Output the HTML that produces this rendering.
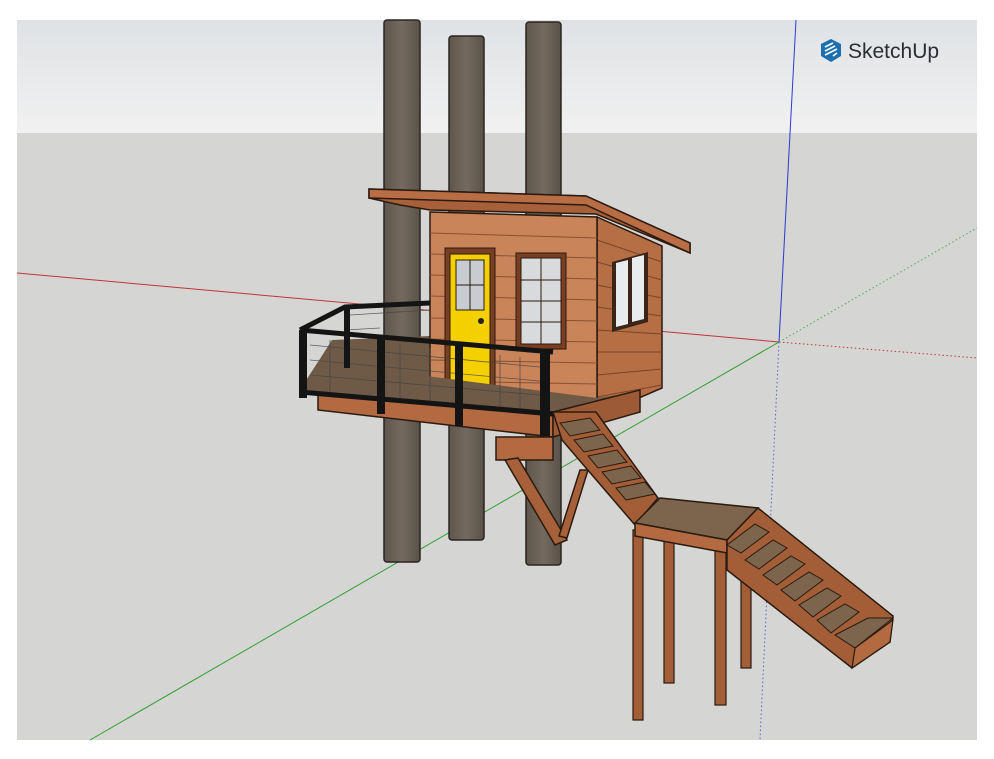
<!DOCTYPE html>
<html><head><meta charset="utf-8"><style>
html,body{margin:0;padding:0;background:#fff;width:994px;height:759px;overflow:hidden}
svg{display:block}
</style></head><body>
<svg width="994" height="759" viewBox="0 0 994 759" xmlns="http://www.w3.org/2000/svg">
<defs>
<linearGradient id="sky" x1="0" y1="0" x2="0" y2="1">
<stop offset="0" stop-color="#dfe2e5"/><stop offset="1" stop-color="#f1f1f1"/></linearGradient>
<linearGradient id="trunk" x1="0" y1="0" x2="1" y2="0">
<stop offset="0" stop-color="#5e554c"/><stop offset="0.5" stop-color="#746a5f"/><stop offset="1" stop-color="#5a5148"/></linearGradient>
</defs>
<rect x="0" y="0" width="994" height="759" fill="#fff"/>
<rect x="17" y="20" width="960" height="113" fill="url(#sky)"/>
<rect x="17" y="133" width="960" height="607" fill="#d5d5d3"/>
<!-- axes -->
<line x1="17" y1="273" x2="779" y2="342" stroke="#c0353a" stroke-width="1"/>
<line x1="779" y1="342" x2="977" y2="358" stroke="#c0353a" stroke-width="1" stroke-dasharray="1.5,2.5"/>
<line x1="796" y1="20" x2="779" y2="342" stroke="#2b3bd0" stroke-width="1"/>
<line x1="779" y1="342" x2="760" y2="740" stroke="#5a64c8" stroke-width="1" stroke-dasharray="1.5,2.5"/>
<line x1="779" y1="342" x2="977" y2="228" stroke="#4caf50" stroke-width="1" stroke-dasharray="1.5,2.5"/>
<line x1="90" y1="740" x2="779" y2="342" stroke="#2fa02f" stroke-width="1"/>
<!-- trees -->
<rect x="384" y="20" width="36" height="542" fill="url(#trunk)" stroke="#2a2520" stroke-width="1.5" rx="3"/>
<rect x="449" y="36" width="35" height="504" fill="url(#trunk)" stroke="#2a2520" stroke-width="1.5" rx="3"/>
<rect x="526" y="22" width="35" height="543" fill="url(#trunk)" stroke="#2a2520" stroke-width="1.5" rx="3"/>
<!-- deck floor (behind cabin) -->
<polygon points="300,390 332,340 430,336 640,392 553,412" fill="#6e5a47"/>
<!-- cabin side wall -->
<polygon points="597,217 662,246 662,388 597,416" fill="#b66e45" stroke="#2a1a10" stroke-width="1.5"/>
<g stroke="#7a4526" stroke-width="1">
<line x1="597" y1="240" x2="662" y2="262"/><line x1="597" y1="262" x2="662" y2="280"/>
<line x1="597" y1="285" x2="662" y2="298"/><line x1="597" y1="307" x2="662" y2="316"/>
<line x1="597" y1="330" x2="662" y2="334"/><line x1="597" y1="352" x2="662" y2="352"/>
<line x1="597" y1="375" x2="662" y2="369"/><line x1="597" y1="397" x2="662" y2="385"/>
</g>
<polygon points="612,262 648,252 648,322 612,332" fill="#3a2518"/>
<polygon points="616,263 628,260 628,324 616,327" fill="#e8ecef"/>
<polygon points="632,258 644,255 644,319 632,322" fill="#e8ecef"/>
<!-- front wall -->
<polygon points="430,212 597,217 597,400 430,392" fill="#c9845a" stroke="#2a1a10" stroke-width="1.5"/>
<g stroke="#8a5230" stroke-width="1">
<line x1="430" y1="233" x2="597" y2="238"/><line x1="430" y1="254" x2="597" y2="258"/>
<line x1="430" y1="275" x2="597" y2="279"/><line x1="430" y1="296" x2="597" y2="300"/>
<line x1="430" y1="318" x2="597" y2="321"/><line x1="430" y1="339" x2="597" y2="342"/>
<line x1="430" y1="360" x2="597" y2="363"/><line x1="430" y1="381" x2="597" y2="384"/>
</g>
<!-- door -->
<rect x="445" y="248" width="50" height="143" fill="#7a3f22" stroke="#2a1a10"/>
<rect x="450" y="254" width="40" height="134" fill="#f5d000" stroke="#2a1a10"/>
<rect x="456" y="260" width="28" height="50" fill="#c8ccd0" stroke="#2a1a10"/>
<line x1="470" y1="260" x2="470" y2="310" stroke="#2a1a10"/><line x1="456" y1="285" x2="484" y2="285" stroke="#2a1a10"/>
<circle cx="481" cy="321" r="3" fill="#222"/>
<!-- window -->
<rect x="516" y="253" width="50" height="96" fill="#7a3f22" stroke="#2a1a10"/>
<rect x="521" y="258" width="40" height="86" fill="#d8dadb" stroke="#2a1a10"/>
<g stroke="#2a1a10"><line x1="541" y1="258" x2="541" y2="344"/><line x1="521" y1="280" x2="561" y2="280"/><line x1="521" y1="301" x2="561" y2="301"/><line x1="521" y1="322" x2="561" y2="322"/></g>
<!-- roof -->
<polygon points="369,189 586,196 690,243 690,253 596,214 430,210 400,205 369,198" fill="#a8603a" stroke="#2a1a10" stroke-width="1.5"/>
<polygon points="369,189 586,196 690,243 690,253 586,205 369,198" fill="#b86d44" stroke="#2a1a10" stroke-width="1.5"/>
<!-- deck front floor strip -->
<polygon points="300,390 318,362 597,398 640,392 553,412" fill="#6e5a47"/>
<!-- deck fascia -->
<polygon points="318,392 553,412 553,437 318,410" fill="#b36a40" stroke="#2a1a10" stroke-width="1.5"/>
<polygon points="553,412 640,390 640,412 553,437" fill="#9d5a36" stroke="#2a1a10" stroke-width="1.5"/>
<!-- railing mesh -->
<g stroke="#444" stroke-width="0.8" opacity="0.8">
<line x1="310" y1="345" x2="550" y2="368"/><line x1="310" y1="360" x2="550" y2="382"/><line x1="310" y1="375" x2="550" y2="396"/>
<line x1="330" y1="340" x2="330" y2="395"/><line x1="400" y1="345" x2="400" y2="402"/><line x1="430" y1="348" x2="430" y2="404"/><line x1="500" y1="355" x2="500" y2="410"/><line x1="520" y1="357" x2="520" y2="412"/>
<line x1="350" y1="315" x2="430" y2="310"/><line x1="345" y1="330" x2="380" y2="328"/>
</g>
<!-- railing frame -->
<g fill="none" stroke="#141414" stroke-width="5" stroke-linejoin="round">
<polyline points="300,330 345,307 430,303"/>
<line x1="300" y1="330" x2="553" y2="352"/>
<line x1="300" y1="392" x2="553" y2="414"/>
</g>
<g fill="#141414">
<rect x="299" y="330" width="8" height="68"/><rect x="344" y="308" width="6" height="60"/>
<rect x="377" y="335" width="8" height="79"/><rect x="455" y="342" width="8" height="84"/>
<rect x="540" y="350" width="10" height="88"/>
</g>
<!-- braces under deck -->
<polygon points="496,437 553,437 553,460 496,460" fill="#b36a40" stroke="#2a1a10" stroke-width="1.5"/>
<polygon points="505,460 518,458 567,540 555,545" fill="#a6613a" stroke="#2a1a10" stroke-width="1.5"/>
<polygon points="580,470 588,470 567,538 559,536" fill="#a6613a" stroke="#2a1a10" stroke-width="1.5"/>
<!-- upper stairs -->
<polygon points="553,412 596,412 658,498 635,525 562,440" fill="#a45e37" stroke="#2a1a10" stroke-width="1.5"/>
<g fill="#7d644d" stroke="#2a1a10" stroke-width="1">
<polygon points="560,423 590,418 600,430 570,436"/>
<polygon points="574,440 603,434 613,446 584,452"/>
<polygon points="588,456 617,450 627,462 598,468"/>
<polygon points="602,472 631,466 641,478 612,484"/>
<polygon points="616,488 645,482 655,494 626,500"/>
</g>
<!-- landing posts -->
<g fill="#a45e37" stroke="#2a1a10" stroke-width="1.2">
<rect x="633" y="530" width="10" height="190"/>
<rect x="664" y="540" width="10" height="143"/>
<rect x="715" y="550" width="11" height="155"/>
<rect x="741" y="575" width="10" height="93"/>
</g>
<!-- landing -->
<polygon points="660,498 758,508 727,540 635,523" fill="#7d644d" stroke="#2a1a10" stroke-width="1.5"/>
<polygon points="635,523 727,540 727,553 635,536" fill="#b36a40" stroke="#2a1a10" stroke-width="1.5"/>
<!-- lower stairs -->
<polygon points="727,540 758,508 893,616 890,642 852,668 727,570" fill="#a45e37" stroke="#2a1a10" stroke-width="1.5"/>
<g fill="#7d644d" stroke="#2a1a10" stroke-width="1">
<polygon points="727,545 755,524 769,532 741,553"/>
<polygon points="745,560 773,540 787,548 759,569"/>
<polygon points="763,575 791,556 805,564 777,585"/>
<polygon points="781,590 809,572 823,580 795,601"/>
<polygon points="799,605 827,588 841,596 813,617"/>
<polygon points="817,620 845,604 859,612 831,633"/>
<polygon points="835,635 868,618 893,618 855,648"/>
</g>
<polygon points="855,648 893,620 890,642 852,668" fill="#b36a40" stroke="#2a1a10" stroke-width="1.2"/>
<!-- logo -->
<g transform="translate(820,39)">
<path d="M11,0 L21,5 L21,17 L11,23 L1,17 L1,5 Z" fill="#1b6fae"/>
<path d="M5,8 L13,4 M5,12 L15,7 M5,16 L17,10 M13,17 L17,14" stroke="#fff" stroke-width="1.6" fill="none"/>
</g>
<text x="848" y="58" font-family="Liberation Sans, sans-serif" font-size="21" fill="#2a2d33">SketchUp</text>
</svg>
</body></html>
